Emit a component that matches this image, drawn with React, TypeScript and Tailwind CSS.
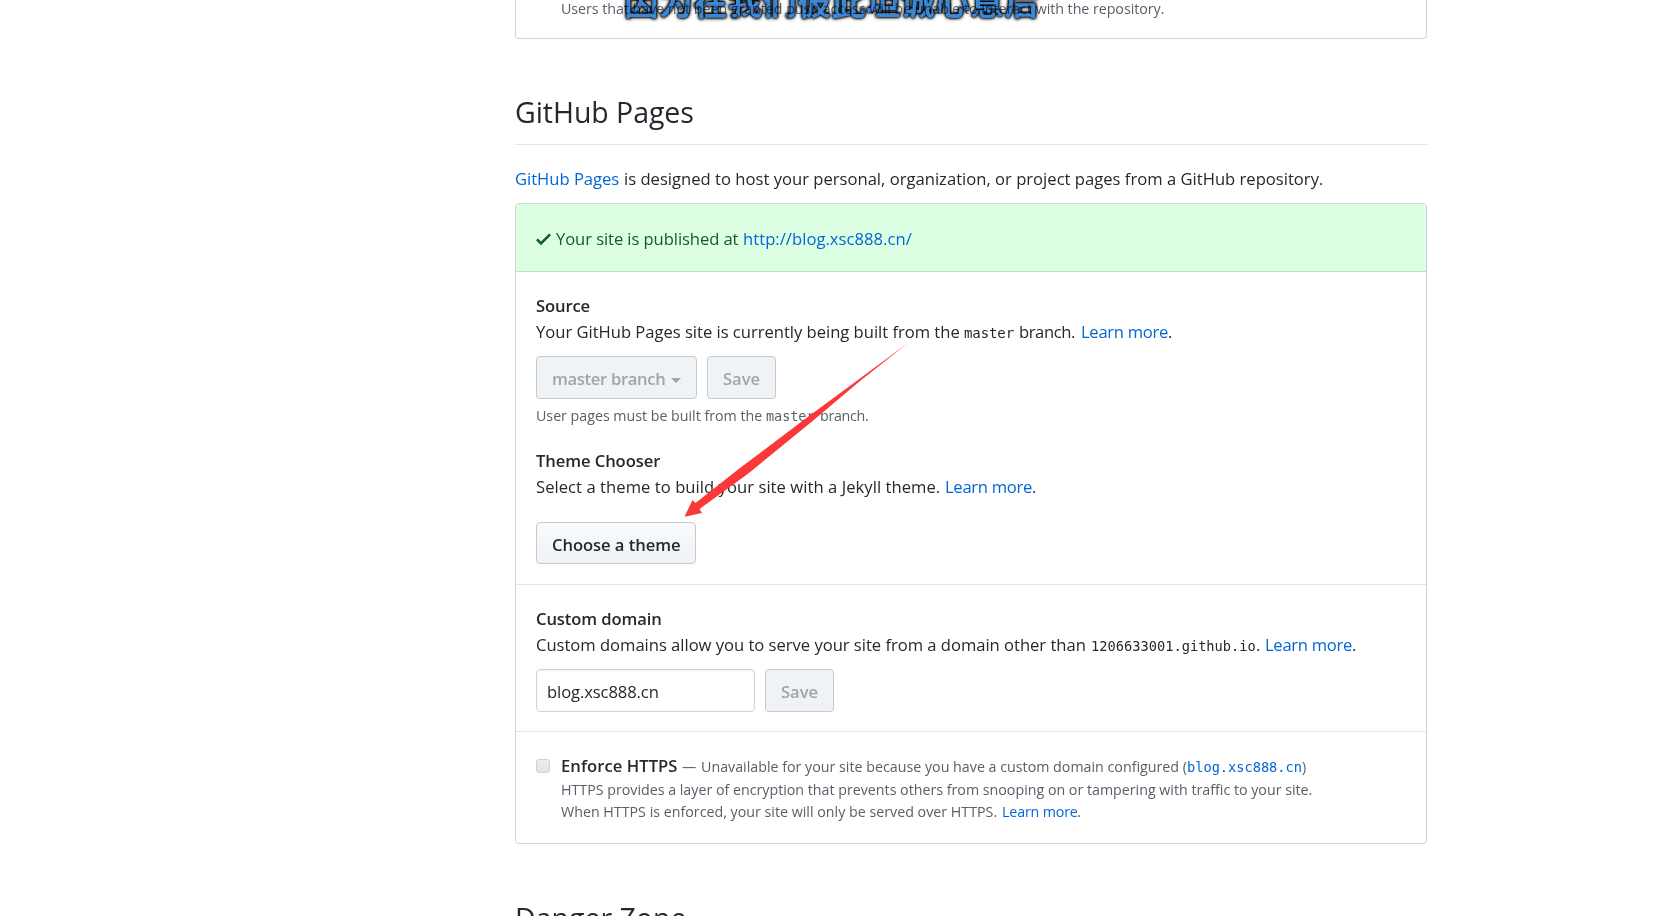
import type { ReactNode } from "react";

const link = "text-[#0366d6]";
const mono = "font-['DejaVu_Sans_Mono',monospace]";

function Line({ children, small = false, className = "" }: { children: ReactNode; small?: boolean; className?: string }) {
  return (
    <div
      className={`flex items-baseline whitespace-nowrap ${
        small ? "h-[22px] text-[14.25px] leading-[22px] text-[#586069]" : "h-[26px] text-[16.6px] leading-[26px]"
      } ${className}`}
    >
      {children}
    </div>
  );
}

function DisabledButton({ children, className = "" }: { children: ReactNode; className?: string }) {
  return (
    <button
      disabled
      className={`flex h-[43px] items-center rounded-[4px] border border-[#c5cad0] bg-[#eff3f6] pl-[15px] pt-[3px] text-[16.6px] font-semibold text-[#9fa5ab] whitespace-nowrap ${className}`}
    >
      {children}
    </button>
  );
}

export default function App() {
  return (
    <div className="relative h-[916px] w-[1667px] overflow-hidden bg-white font-['Open_Sans',sans-serif] text-[#24292e]">
      <main className="ml-[515px] flow-root w-[912px]">
        <section className="flow-root h-[39px] rounded-b-[4px] border border-t-0 border-[#d1d5da] pl-[45px]">
          <Line small className="-mt-[2px] tracking-[-0.04px]">
            Users that have not been granted push access will be unable to interact with the repository.
          </Line>
        </section>

        <h2 className="h-[106px] border-b border-[#e1e4e8] pt-[54px] text-[28.5px] leading-[38px] tracking-[-0.05px]">
          GitHub Pages
        </h2>

        <Line className="mt-[21px]">
          <span className={`w-[109px] tracking-[-0.02px] ${link}`}>GitHub Pages</span>
          <span className="tracking-[0.01px]">
            is designed to host your personal, organization, or project pages from a GitHub repository.
          </span>
        </Line>

        <section className="mt-[11px] h-[641px] rounded-[4px] border border-[#d1d5da]">
          <div className="flex h-[68px] items-center rounded-t-[3px] border-b border-[#bfdfc7] bg-[#dcffe4] pl-5 pt-[2px] text-[#165c26]">
            <svg width="15" height="20" viewBox="0 0 12 16" className="mr-[5px]" fill="currentColor">
              <path d="M12 5l-8 8-4-4 1.5-1.5L4 10l6.5-6.5L12 5z" />
            </svg>
            <Line>
              <span className="w-[187px] tracking-[-0.08px]">Your site is published at</span>
              <span className={`tracking-[0.04px] ${link}`}>http://blog.xsc888.cn/</span>
            </Line>
          </div>

          <div className="h-[313px] border-b border-[#e1e4e8] pl-5 pt-[21px]">
            <Line className="font-semibold tracking-[-0.13px]">Source</Line>
            <Line>
              <span className="w-[428px] tracking-[-0.02px]">Your GitHub Pages site is currently being built from the</span>
              <span className={`w-[55px] text-[14px] tracking-[-0.1px] ${mono}`}>master</span>
              <span className="w-[62px] tracking-[-0.41px]">branch.</span>
              <span className={`w-[87px] tracking-[-0.3px] ${link}`}>Learn more</span>
              <span>.</span>
            </Line>
            <div className="mt-[11px] flex gap-[10px]">
              <DisabledButton className="w-[161px] tracking-[-0.32px]">
                master branch
                <svg width="10" height="5" viewBox="0 0 10 5" className="ml-[6px] mt-[3px]" fill="currentColor">
                  <path d="M0 0h10L5 5z" />
                </svg>
              </DisabledButton>
              <DisabledButton className="w-[69px]">Save</DisabledButton>
            </div>
            <Line small className="mt-[6px]">
              <span className="w-[230px] tracking-[-0.02px]">User pages must be built from the</span>
              <span className={`w-[54px] text-[13.6px] tracking-[-0.1px] ${mono}`}>master</span>
              <span className="tracking-[-0.3px]">branch.</span>
            </Line>

            <Line className="mt-[21px] font-semibold tracking-[-0.08px]">Theme Chooser</Line>
            <Line>
              <span className="w-[409px] tracking-[0.05px]">Select a theme to build your site with a Jekyll theme.</span>
              <span className={`w-[87px] tracking-[-0.3px] ${link}`}>Learn more</span>
              <span>.</span>
            </Line>
            <button className="mt-[22px] flex h-[42px] w-[160px] items-center rounded-[4px] border border-[#c5cad0] bg-linear-to-b from-[#fafbfc] to-[#eff3f6] to-90% pl-[15px] pt-[4px] text-[16.6px] font-semibold tracking-[-0.06px] whitespace-nowrap">
              Choose a theme
            </button>
          </div>

          <div className="h-[147px] border-b border-[#e1e4e8] pl-5 pt-[21px]">
            <Line className="font-semibold tracking-[-0.1px]">Custom domain</Line>
            <Line>
              <span className="w-[555px] tracking-[-0.02px]">
                Custom domains allow you to serve your site from a domain other than
              </span>
              <span className={`w-[165px] text-[13.7px] ${mono}`}>1206633001.github.io</span>
              <span className="w-[9px]">.</span>
              <span className={`w-[87px] tracking-[-0.3px] ${link}`}>Learn more</span>
              <span>.</span>
            </Line>
            <div className="mt-[11px] flex gap-[10px]">
              <input
                type="text"
                defaultValue="blog.xsc888.cn"
                className="h-[43px] w-[219px] rounded-[4px] border border-[#d1d5da] bg-white pl-[10px] pt-[2px] text-[16.6px] tracking-[-0.1px] shadow-[inset_0_1px_2px_rgba(27,31,35,0.075)] outline-none"
              />
              <DisabledButton className="w-[69px]">Save</DisabledButton>
            </div>
          </div>

          <div className="flex pl-5 pt-[21px]">
            <span className="mt-[6px] mr-[11px] size-[14px] shrink-0 rounded-[3px] border border-[#d0d0d0] bg-linear-to-b from-[#ececec] to-[#e4e4e4]" />
            <div>
              <Line>
                <span className="w-[121px] font-semibold tracking-[0.06px]">Enforce HTTPS</span>
                <span className="w-[19px] text-[14.25px] text-[#586069]">—</span>
                <span className="w-[486px] text-[14.25px] text-[#586069]">
                  Unavailable for your site because you have a custom domain configured (
                </span>
                <span className={`w-[115px] text-[13.65px] ${mono} ${link}`}>blog.xsc888.cn</span>
                <span className="text-[14.25px] text-[#586069]">)</span>
              </Line>
              <Line small className="tracking-[-0.01px]">
                HTTPS provides a layer of encryption that prevents others from snooping on or tampering with traffic to
                your site.
              </Line>
              <Line small>
                <span className="w-[441px]">When HTTPS is enforced, your site will only be served over HTTPS.</span>
                <span className={`w-[75px] tracking-[-0.15px] ${link}`}>Learn more</span>
                <span>.</span>
              </Line>
            </div>
          </div>
        </section>

        <h2 className="pt-[55px] text-[28.5px] leading-[38px]">Danger Zone</h2>
      </main>

      <div className="absolute -top-[21px] left-[624px] font-['Noto_Sans_CJK_SC',sans-serif] text-[34.6px] font-bold leading-[42px] whitespace-nowrap text-[#3c86d2] mix-blend-multiply [text-shadow:0_0_2px_#000,0_0_3px_#000,0_0_4px_#000,0_-1px_3px_#000]">
        因为在我们彼此坦诚心意后
      </div>

      <svg className="absolute left-[680px] top-[338px]" width="232" height="182" viewBox="680 338 232 182" fill="#fb3838">
        <path d="M908 343L805 419L740 468L695.5 503L692.5 500L684.5 516.8L702 513L699.5 509L747 474.5L812 421.5L860 381Z" />
      </svg>
    </div>
  );
}
